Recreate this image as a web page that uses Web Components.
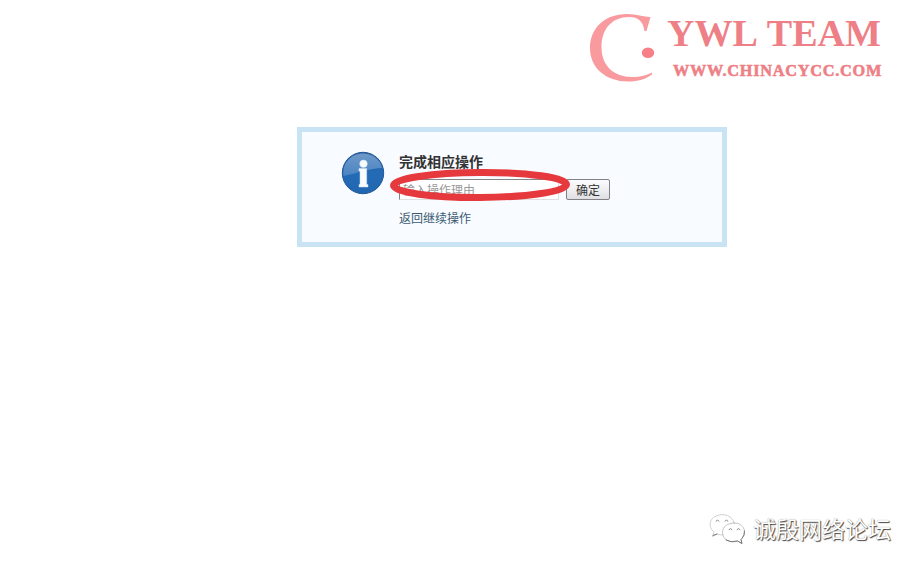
<!DOCTYPE html>
<html lang="zh-CN"><head><meta charset="utf-8"><title>完成相应操作</title>
<style>html,body{margin:0;background:#fff}body{font:12px "Liberation Sans","Noto Sans CJK SC",sans-serif}</style></head>
<body><forum-page></forum-page>
<script>
const define=(name,html)=>customElements.define(name,class extends HTMLElement{
  constructor(){super();this.attachShadow({mode:'open'}).innerHTML=html}
});
define('team-logo',`<style>:host{display:block;width:310px;height:82px}svg{display:block}</style>
<svg width="310" height="82" viewBox="590 5 310 82">
<path d="M650.5 17 L646.5 31 H644.5 C643 21 638 17 629 17 C612 17 601.500 29 601.500 47 C601.500 66 614 77 632 77 C641 77 647 75 652 72.500 V74.500 C646 79 638 81.500 628 81.500 C606 81.500 590 68 590 48 C590 28 605 14 627 14 C637 14 643 17 650.5 17Z" fill="#f99a9f"/>
<ellipse cx="648" cy="52.800" rx="6.200" ry="5.300" fill="#f77f87"/>
<g fill="#ee7f86" font-family="Liberation Serif,serif" font-weight="bold">
<text x="667" y="46.200" font-size="38" word-spacing="2" textLength="214" lengthAdjust="spacingAndGlyphs">YWL TEAM</text>
<text x="673" y="76" font-size="17.500" stroke="#ee7f86" stroke-width=".6" letter-spacing=".8" textLength="209" lengthAdjust="spacingAndGlyphs">WWW.CHINACYCC.COM</text></g></svg>`);
define('info-icon',`<style>:host{display:block;width:44px;height:44px}svg{display:block}</style>
<svg width="44" height="44" viewBox="0 0 44 44"><defs><linearGradient id="b" x2="0" y2="1"><stop stop-color="#245a9e"/><stop offset=".5" stop-color="#246bb5"/><stop offset="1" stop-color="#2166b0"/></linearGradient><linearGradient id="g" x2="0" y2="1"><stop stop-color="#7ba4d1"/><stop offset="1" stop-color="#5188c5"/></linearGradient></defs>
<circle cx="22" cy="22" r="20.700" fill="url(#b)" stroke="#235995" stroke-width="1"/>
<path d="M2.500 25 C1 12 10 2.500 22 2.500 C32 2.500 39.500 9 41 17 C30 17 13 23 2.500 25Z" fill="url(#g)" opacity=".85"/>
<g fill="#f8fcff" stroke="#cfe0f3" stroke-width=".5"><circle cx="22.500" cy="12.800" r="3.800"/><path d="M18 17.500 H25.700 V33.500 H27 V36 H18 V33.500 H19 V20 H18Z"/></g></svg>`);
define('reason-field',`<style>:host{display:block}input{display:block;box-sizing:border-box;width:160px;height:21px;margin:0;padding:0 3px;border:1px solid;border-color:#848484 #e0e0e0 #e0e0e0 #848484;background:#fff;font:12px "Noto Sans CJK SC",sans-serif;color:#666}input::placeholder{color:#999;opacity:1}</style><input placeholder="输入操作理由">`);
define('action-button',`<style>:host{display:block}button{display:block;box-sizing:border-box;width:44px;height:21px;padding:0;border:1px solid #818187;border-radius:2px;background:linear-gradient(#fbfbfd,#f0f0f3 48%,#dfdfe3);font:12px/19px "Noto Sans CJK SC",sans-serif;color:#333}</style><button><slot></slot></button>`);
define('red-mark',`<style>:host{display:block;width:180px;height:34px;pointer-events:none}svg{display:block}</style><svg width="180" height="34"><ellipse cx="90" cy="17" rx="86.500" ry="12.500" fill="none" stroke="#e6393d" stroke-width="7" transform="rotate(-.3 90 17)"/></svg>`);
define('message-panel',`<style>
:host{display:flex;box-sizing:border-box;width:430px;height:120px;border:5px solid #c8e3f3;background:#f8fbff;padding:19px 0 0 39px;gap:14px}
.content{display:flex;flex-direction:column}
h4{margin:1px 0 8px;font:bold 14px/18px "Noto Sans CJK SC",sans-serif;color:#333}
.row{position:relative;display:flex;gap:7px;margin-top:1px}
red-mark{position:absolute;left:-9px;top:-11px}
a{font:12px/18px "Noto Sans CJK SC",sans-serif;color:#3b5b73;margin-top:9px;text-decoration:none}</style>
<info-icon></info-icon><div class="content"><h4><slot name="title"></slot></h4><div class="row"><reason-field></reason-field><action-button>确定</action-button><red-mark></red-mark></div><a><slot name="link"></slot></a></div>`);
define('forum-watermark',`<style>:host{display:flex;align-items:center;gap:7px;color:#fff;font:23px/34px "Noto Sans CJK SC",sans-serif;text-shadow:1px 1px 1px #444,0 0 1px #888}svg{display:block}span{margin-top:-5px}</style>
<svg width="37" height="34" viewBox="0 0 37 34" fill="none" stroke-linecap="round"><path d="M14 22 Q11 22 8 21 L3.500 23.500 L5 19 C-1 14 0 6 7 3 C15-.5 24 3 25 10" stroke="#ccc" stroke-width=".9"/><path d="M25.500 10 C18 10 13.500 14 13.500 19.500 C13.500 27 22 30.500 28.500 28 L33 30.500 L32 26.500 C39 20 35 10 25.500 10Z" stroke="#bbb" stroke-width=".9"/><path d="M32 26.500 L33 30.500 L28.500 28 Q22 30 17 27 M4 22.500 L8 21 M35.500 18 Q36 22 33 25.500" stroke="#777"/><path d="M7 8 q1.500-2 3 0 M16 8 q1.500-2 3 0 M20 16.500 q1.500-2 3 0 M28 16.500 q1.500-2 3 0" stroke="#888"/></svg><span><slot></slot></span>`);
define('forum-page',`<style>:host{display:flex;flex-direction:column;box-sizing:border-box;width:920px;height:569px;padding:5px 0 22px;overflow:hidden;background:#fff}
team-logo{margin-left:590px}message-panel{margin:40px 0 0 297px}forum-watermark{margin:auto 0 0 709px}</style>
<team-logo></team-logo><message-panel><span slot="title">完成相应操作</span><span slot="link">返回继续操作</span></message-panel><forum-watermark>诚殷网络论坛</forum-watermark>`);
</script></body></html>
